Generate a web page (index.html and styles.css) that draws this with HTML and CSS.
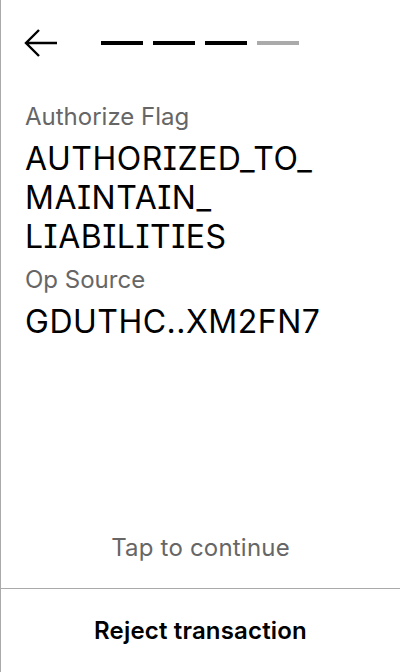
FILE: index.html
```html
<!DOCTYPE html>
<html>
<head>
<meta charset="utf-8">
<link rel="stylesheet" href="styles.css">
</head>
<body>
<div class="screen">
  <div class="header">
    <svg class="back" width="34" height="28" viewBox="0 0 34 28">
      <path d="M33 14H3M15 1L2 14L15 27" fill="none" stroke="#000" stroke-width="2.4"/>
    </svg>
    <div class="progress">
      <span class="seg on"></span>
      <span class="seg on"></span>
      <span class="seg on"></span>
      <span class="seg"></span>
    </div>
  </div>
  <div class="content">
    <div class="label">Authorize Flag</div>
    <div class="value">AUTHORIZED_TO_<br>MAINTAIN_<br>LIABILITIES</div>
    <div class="label">Op Source</div>
    <div class="value">GDUTHC..XM2FN7</div>
  </div>
  <div class="tap">Tap to continue</div>
  <div class="footer">Reject transaction</div>
</div>
</body>
</html>
```
FILE: styles.css
```css
html, body { margin: 0; padding: 0; background: #fff; }
body { font-family: Inter, "Noto Sans", sans-serif; color: #000; line-height: normal; }
.screen {
  height: 672px;
  box-sizing: border-box;
  border-left: 1px solid #aaa;
  display: flex;
  flex-direction: column;
}
.header {
  display: flex;
  align-items: center;
  padding: 29px 0 0 23px;
  height: 28px;
}
.back { display: block; }
.progress {
  display: flex;
  gap: 10px;
  margin-left: 43px;
}
.seg { width: 42px; height: 4px; background: #aaa; display: block; }
.seg.on { background: #000; }
.content {
  padding: 45px 24px 0 24px;
  flex: 1;
}
.label { font-size: 24px; color: #666; margin-bottom: 8px; }
.value { font-size: 32px; font-feature-settings: "cv08" 1; letter-spacing: 0.5px; color: #000; margin-bottom: 9px; }
.tap {
  text-align: center;
  font-size: 24px;
  letter-spacing: 0.2px;
  color: #666;
  padding-bottom: 26px;
}
.footer {
  border-top: 1px solid #aaa;
  height: 83px;
  display: flex;
  align-items: center;
  justify-content: center;
  font-size: 24px;
  letter-spacing: 0.17px;
  font-weight: 600;
}
```
